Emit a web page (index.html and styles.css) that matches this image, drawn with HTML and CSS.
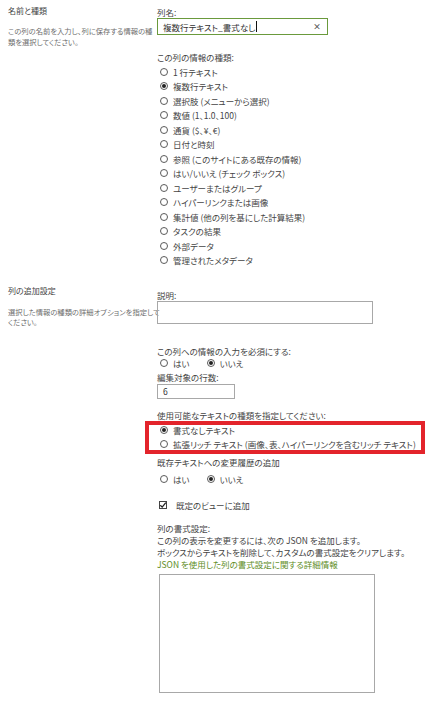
FILE: index.html
```html
<!DOCTYPE html>
<html lang="ja">
<head>
<meta charset="utf-8">
<title>列の作成</title>
<link rel="stylesheet" href="styles.css">
</head>
<body>
<div class="page">
  <section class="sec sec-name">
    <div class="sec-info">
      <div class="sec-title">名前と種類</div>
      <div class="sec-desc">この列の名前を入力し、列に保存する情報の種<br>類を選択してください。</div>
    </div>
    <div class="sec-body">
      <div class="lbl lbl-name">列名:</div>
      <div class="textbox">
        <span class="textbox-value">複数行テキスト_書式なし</span><span class="caret"></span>
        <span class="clear">×</span>
      </div>
      <div class="lbl lbl-type">この列の情報の種類:</div>
      <ul class="choices">
        <li class="opt"><span class="radio"></span>1 行テキスト</li>
        <li class="opt"><span class="radio checked"></span>複数行テキスト</li>
        <li class="opt"><span class="radio"></span>選択肢 (メニューから選択)</li>
        <li class="opt"><span class="radio"></span>数値 (1、1.0、100)</li>
        <li class="opt"><span class="radio"></span>通貨 ($、¥、€)</li>
        <li class="opt"><span class="radio"></span>日付と時刻</li>
        <li class="opt"><span class="radio"></span>参照 (このサイトにある既存の情報)</li>
        <li class="opt"><span class="radio"></span>はい/いいえ (チェック ボックス)</li>
        <li class="opt"><span class="radio"></span>ユーザーまたはグループ</li>
        <li class="opt"><span class="radio"></span>ハイパーリンクまたは画像</li>
        <li class="opt"><span class="radio"></span>集計値 (他の列を基にした計算結果)</li>
        <li class="opt"><span class="radio"></span>タスクの結果</li>
        <li class="opt"><span class="radio"></span>外部データ</li>
        <li class="opt"><span class="radio"></span>管理されたメタデータ</li>
      </ul>
    </div>
  </section>

  <section class="sec sec-extra">
    <div class="sec-info">
      <div class="sec-title">列の追加設定</div>
      <div class="sec-desc">選択した情報の種類の詳細オプションを指定して<br>ください。</div>
    </div>
    <div class="sec-body">
      <div class="lbl">説明:</div>
      <div class="memo"></div>

      <div class="lbl lbl-required">この列への情報の入力を必須にする:</div>
      <div class="inline-opts">
        <span class="opt"><span class="radio"></span>はい</span>
        <span class="opt"><span class="radio checked"></span>いいえ</span>
      </div>

      <div class="lbl lbl-lines">編集対象の行数:</div>
      <div class="numbox">6</div>

      <div class="lbl lbl-texttype">使用可能なテキストの種類を指定してください:</div>
      <div class="highlight">
        <div class="opt opt-tall"><span class="radio checked"></span>書式なしテキスト</div>
        <div class="opt opt-tall"><span class="radio"></span>拡張リッチ テキスト (画像、表、ハイパーリンクを含むリッチ テキスト)</div>
      </div>

      <div class="lbl lbl-append">既存テキストへの変更履歴の追加</div>
      <div class="inline-opts inline-opts-append">
        <span class="opt"><span class="radio"></span>はい</span>
        <span class="opt"><span class="radio checked"></span>いいえ</span>
      </div>

      <div class="check-row">
        <span class="checkbox"><svg viewBox="0 0 8 8" width="8" height="8"><path d="M1.3 4.2 L3.2 6.1 L6.8 1.6" fill="none" stroke="#222" stroke-width="1.3"/></svg></span>既定のビューに追加
      </div>

      <div class="fmt">
        <div>列の書式設定:</div>
        <div>この列の表示を変更するには、次の JSON を追加します。</div>
        <div>ボックスからテキストを削除して、カスタムの書式設定をクリアします。</div>
        <div class="fmt-link">JSON を使用した列の書式設定に関する詳細情報</div>
      </div>
      <div class="json-box"></div>
    </div>
  </section>
</div>
</body>
</html>
```

FILE: styles.css
```css
html, body {
  margin: 0;
  padding: 0;
  background: #ffffff;
}

body {
  font-family: "Noto Sans CJK JP", "Noto Sans", sans-serif;
  font-feature-settings: "palt";
  color: #444444;
  font-size: 8.5px;
}

.sec {
  display: grid;
  grid-template-columns: 149px 1fr;
}

.sec-info {
  padding-left: 8px;
}

.sec-title {
  font-size: 8px;
  line-height: 10px;
  color: #444444;
}

.sec-desc {
  font-size: 7.3px;
  line-height: 10.5px;
  color: #6e6e6e;
  margin-top: 10px;
  white-space: nowrap;
}

.sec-name .sec-info {
  padding-top: 6px;
}

.sec-extra .sec-info {
  padding-top: 18.5px;
}

.sec-extra .sec-desc {
  margin-top: 11px;
  line-height: 10px;
}

.sec-body {
  padding-left: 8px;
}

.sec-extra .sec-body {
  padding-top: 21.5px;
}

.lbl {
  font-size: 8.5px;
  line-height: 12px;
  color: #444444;
  white-space: nowrap;
}

.lbl-name {
  margin-top: 6px;
}

.textbox {
  box-sizing: border-box;
  width: 171px;
  height: 17px;
  border: 1px solid #6a9a3c;
  display: flex;
  align-items: center;
  padding-left: 5px;
  padding-right: 6px;
  color: #333333;
}

.textbox-value {
  line-height: 12px;
}

.caret {
  display: inline-block;
  width: 1px;
  height: 11px;
  background: #111111;
  margin-left: 1px;
}

.clear {
  margin-left: auto;
  font-size: 8px;
  font-weight: bold;
  color: #555555;
  line-height: 10px;
}

.lbl-type {
  margin-top: 16px;
}

.choices {
  list-style: none;
  margin: 1.5px 0 0 0;
  padding: 0 0 0 3px;
}

.opt {
  display: flex;
  align-items: center;
  height: 14.5px;
  white-space: nowrap;
  color: #444444;
}

.radio {
  position: relative;
  box-sizing: border-box;
  display: inline-block;
  flex: none;
  width: 8px;
  height: 8px;
  border: 1px solid #5a5a5a;
  border-radius: 50%;
  margin-right: 5px;
  background: #ffffff;
}

.radio.checked::after {
  content: "";
  position: absolute;
  left: 1px;
  top: 1px;
  width: 4px;
  height: 4px;
  border-radius: 50%;
  background: #222222;
}

.memo {
  box-sizing: border-box;
  width: 216px;
  height: 23px;
  border: 1px solid #a8a8a8;
}

.lbl-required {
  margin-top: 21px;
}

.inline-opts {
  display: flex;
  padding-left: 3px;
  gap: 17px;
}

.inline-opts .opt {
  height: 12px;
}

.lbl-lines {
  margin-top: 2px;
}

.numbox {
  box-sizing: border-box;
  width: 78px;
  height: 15px;
  margin-top: 1px;
  border: 1px solid #a8a8a8;
  padding-left: 5px;
  line-height: 13px;
  color: #333333;
}

.lbl-texttype {
  margin-top: 10px;
}

.highlight {
  position: relative;
  margin-top: 2px;
  padding-left: 3px;
}

.highlight::before {
  content: "";
  position: absolute;
  left: -12px;
  top: -2px;
  width: 280px;
  bottom: -3px;
  box-sizing: border-box;
  border: 4px solid #e3242b;
  pointer-events: none;
}

.opt-tall {
  height: 14px;
}

.lbl-append {
  margin-top: 5px;
}

.inline-opts-append {
  margin-top: 5px;
}

.check-row {
  display: flex;
  align-items: center;
  height: 12px;
  margin-top: 14px;
  padding-left: 2px;
  white-space: nowrap;
}

.checkbox {
  box-sizing: border-box;
  display: inline-flex;
  width: 8px;
  height: 8px;
  border: 1px solid #444444;
  margin-right: 9px;
  align-items: center;
  justify-content: center;
}

.checkbox svg {
  display: block;
  width: 8px;
  height: 8px;
  flex: none;
}

.fmt {
  margin-top: 11px;
  line-height: 12px;
  white-space: nowrap;
}

.fmt-link {
  color: #5e8d25;
}

.json-box {
  box-sizing: border-box;
  width: 216px;
  height: 119px;
  margin-top: 4px;
  margin-left: 2px;
  border: 1px solid #a8a8a8;
}
```
